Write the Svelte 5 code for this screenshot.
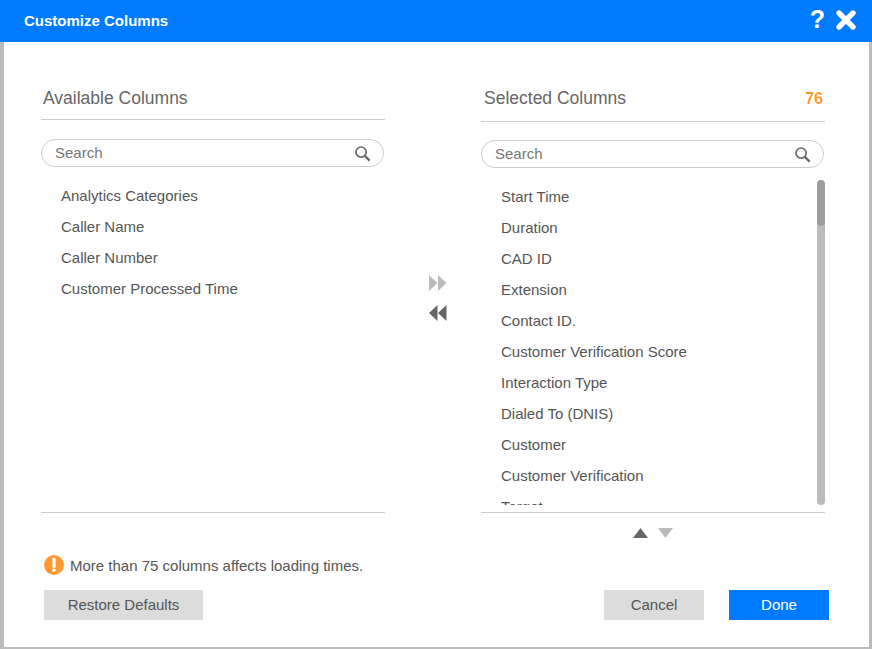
<script lang="ts">
  const available = ['Analytics Categories', 'Caller Name', 'Caller Number', 'Customer Processed Time'];
  const selected = [
    'Start Time',
    'Duration',
    'CAD ID',
    'Extension',
    'Contact ID.',
    'Customer Verification Score',
    'Interaction Type',
    'Dialed To (DNIS)',
    'Customer',
    'Customer Verification',
    'Target'
  ];
</script>

{#snippet searchBox()}
  <div class="search">
    <input type="text" placeholder="Search" />
    <svg width="17" height="17" viewBox="0 0 18 18" fill="none" stroke="#666">
      <circle cx="7.5" cy="7.5" r="5.4" stroke-width="1.8" />
      <path d="M11.5 11.5 L16.5 16.5" stroke-width="2.4" />
    </svg>
  </div>
{/snippet}

<div class="dialog">
  <header class="titlebar">
    <h1>Customize Columns</h1>
    <span class="help">?</span>
    <svg class="close" width="22" height="22" viewBox="0 0 22 22">
      <path d="M4 4 L18 18 M18 4 L4 18" stroke="#fff" stroke-width="5.4" stroke-linecap="round" />
    </svg>
  </header>

  <div class="body">
    <section class="col col-left">
      <div class="col-head">
        <h2>Available Columns</h2>
      </div>
      {@render searchBox()}
      <ul class="list">
        {#each available as name}
          <li>{name}</li>
        {/each}
      </ul>
    </section>

    <div class="transfer">
      <svg width="18" height="16" viewBox="0 0 18 16" fill="#bbb">
        <path d="M0 0 L8.5 8 L0 16 Z M9 0 L17.5 8 L9 16 Z" />
      </svg>
      <svg width="18" height="16" viewBox="0 0 18 16" fill="#666">
        <path d="M8.5 0 L0 8 L8.5 16 Z M17.5 0 L9 8 L17.5 16 Z" />
      </svg>
    </div>

    <section class="col col-right">
      <div class="col-head">
        <h2>Selected Columns</h2>
        <span class="count">76</span>
      </div>
      {@render searchBox()}
      <div class="scroller">
        <ul class="list">
          {#each selected as name}
            <li>{name}</li>
          {/each}
        </ul>
        <div class="scrollbar"><div class="thumb"></div></div>
      </div>
    </section>
  </div>

  <div class="reorder">
    <svg width="15" height="10" viewBox="0 0 15 10" fill="#666"><path d="M7.5 0 L15 10 L0 10 Z" /></svg>
    <svg width="15" height="10" viewBox="0 0 15 10" fill="#bbb"><path d="M0 0 L15 0 L7.5 10 Z" /></svg>
  </div>

  <div class="warning">
    <svg width="20" height="20" viewBox="0 0 20 20">
      <circle cx="10" cy="10" r="10" fill="#ff9a33" />
      <path d="M10 4 L10 11.5" stroke="#fff" stroke-width="3.2" stroke-linecap="round" />
      <circle cx="10" cy="15.2" r="1.7" fill="#fff" />
    </svg>
    <span>More than 75 columns affects loading times.</span>
  </div>

  <footer class="actions">
    <button class="btn">Restore Defaults</button>
    <div class="spacer"></div>
    <button class="btn cancel">Cancel</button>
    <button class="btn primary">Done</button>
  </footer>
</div>

<style>
  :global(body) {
    margin: 0;
    background: #fff;
  }
  .dialog {
    box-sizing: border-box;
    width: 872px;
    height: 649px;
    display: flex;
    flex-direction: column;
    border-left: 4px solid #bbb;
    border-right: 3px solid #bbb;
    border-bottom: 2px solid #bbb;
    background: #fff;
    font-family: "Liberation Sans", Arial, sans-serif;
    color: #555;
  }
  .titlebar {
    height: 42px;
    margin: 0 -3px 0 -4px;
    padding: 0 15px 0 24px;
    display: flex;
    align-items: center;
    background: #007bff;
    color: #fff;
    flex: none;
  }
  h1 {
    flex: 1;
    margin: -2px 0 0;
    font-size: 15px;
    font-weight: 700;
  }
  .help {
    font-size: 25px;
    font-weight: 700;
    margin-right: 10px;
    line-height: 1;
    margin-top: -3px;
  }
  .close {
    margin-top: -2px;
  }
  .body {
    height: 471px;
    padding-left: 37px;
    display: flex;
    flex: none;
  }
  .col {
    width: 344px;
    display: flex;
    flex-direction: column;
    border-bottom: 1px solid #ccc;
  }
  .col-head {
    box-sizing: border-box;
    display: flex;
    align-items: center;
    justify-content: space-between;
    border-bottom: 1px solid #ccc;
    height: 78px;
    padding: 36px 2px 0 2px;
  }
  .col-right .col-head {
    height: 80px;
    padding: 34px 2px 0 3px;
  }
  h2 {
    margin: 0;
    font-size: 17.5px;
    font-weight: 400;
    color: #666;
  }
  .count {
    font-size: 16px;
    font-weight: 700;
    color: #ff9a33;
  }
  .search {
    box-sizing: border-box;
    height: 28px;
    width: 343px;
    margin-top: 19px;
    padding: 0 12px 2px 13px;
    display: flex;
    align-items: center;
    border: 1px solid #ccc;
    border-radius: 14px;
  }
  .search svg {
    margin-top: 2px;
  }
  .col-right .search {
    margin-top: 18px;
  }
  .search input {
    flex: 1;
    min-width: 0;
    padding: 0;
    border: none;
    outline: none;
    background: none;
    font: inherit;
    font-size: 15px;
    color: #555;
  }
  .search input::placeholder {
    color: #777;
    opacity: 1;
  }
  .list {
    margin: 0;
    padding: 13px 0 0 20px;
    list-style: none;
  }
  .list li {
    height: 31px;
    line-height: 31px;
    font-size: 15px;
    white-space: nowrap;
  }
  .scroller {
    position: relative;
    height: 337px;
    margin-bottom: 7px;
    overflow: hidden;
  }
  .scrollbar {
    position: absolute;
    top: 12px;
    right: 0;
    bottom: 0;
    width: 8px;
    border-radius: 4px;
    background: #bbb;
    overflow: hidden;
  }
  .thumb {
    height: 46px;
    border-radius: 4px;
    background: #9c9c9c;
  }
  .transfer {
    width: 96px;
    padding: 233px 0 0 10px;
    box-sizing: border-box;
    display: flex;
    flex-direction: column;
    align-items: center;
    gap: 14px;
  }
  .reorder {
    margin-top: 15px;
    padding-left: 629px;
    display: flex;
    gap: 10px;
    flex: none;
  }
  .warning {
    margin-top: 17px;
    padding-left: 40px;
    display: flex;
    align-items: center;
    gap: 6px;
    font-size: 15px;
    flex: none;
  }
  .actions {
    margin-top: 15px;
    padding: 0 40px;
    display: flex;
    flex: none;
  }
  .spacer {
    flex: 1;
  }
  .btn {
    width: 100px;
    height: 30px;
    padding: 0 0 2px;
    border: none;
    border-radius: 0;
    background: #dcdcdc;
    color: #555;
    font: inherit;
    font-size: 15px;
  }
  .actions > .btn:first-child {
    width: 159px;
  }
  .cancel {
    margin-right: 25px;
  }
  .primary {
    background: #007bff;
    color: #fff;
  }
</style>
